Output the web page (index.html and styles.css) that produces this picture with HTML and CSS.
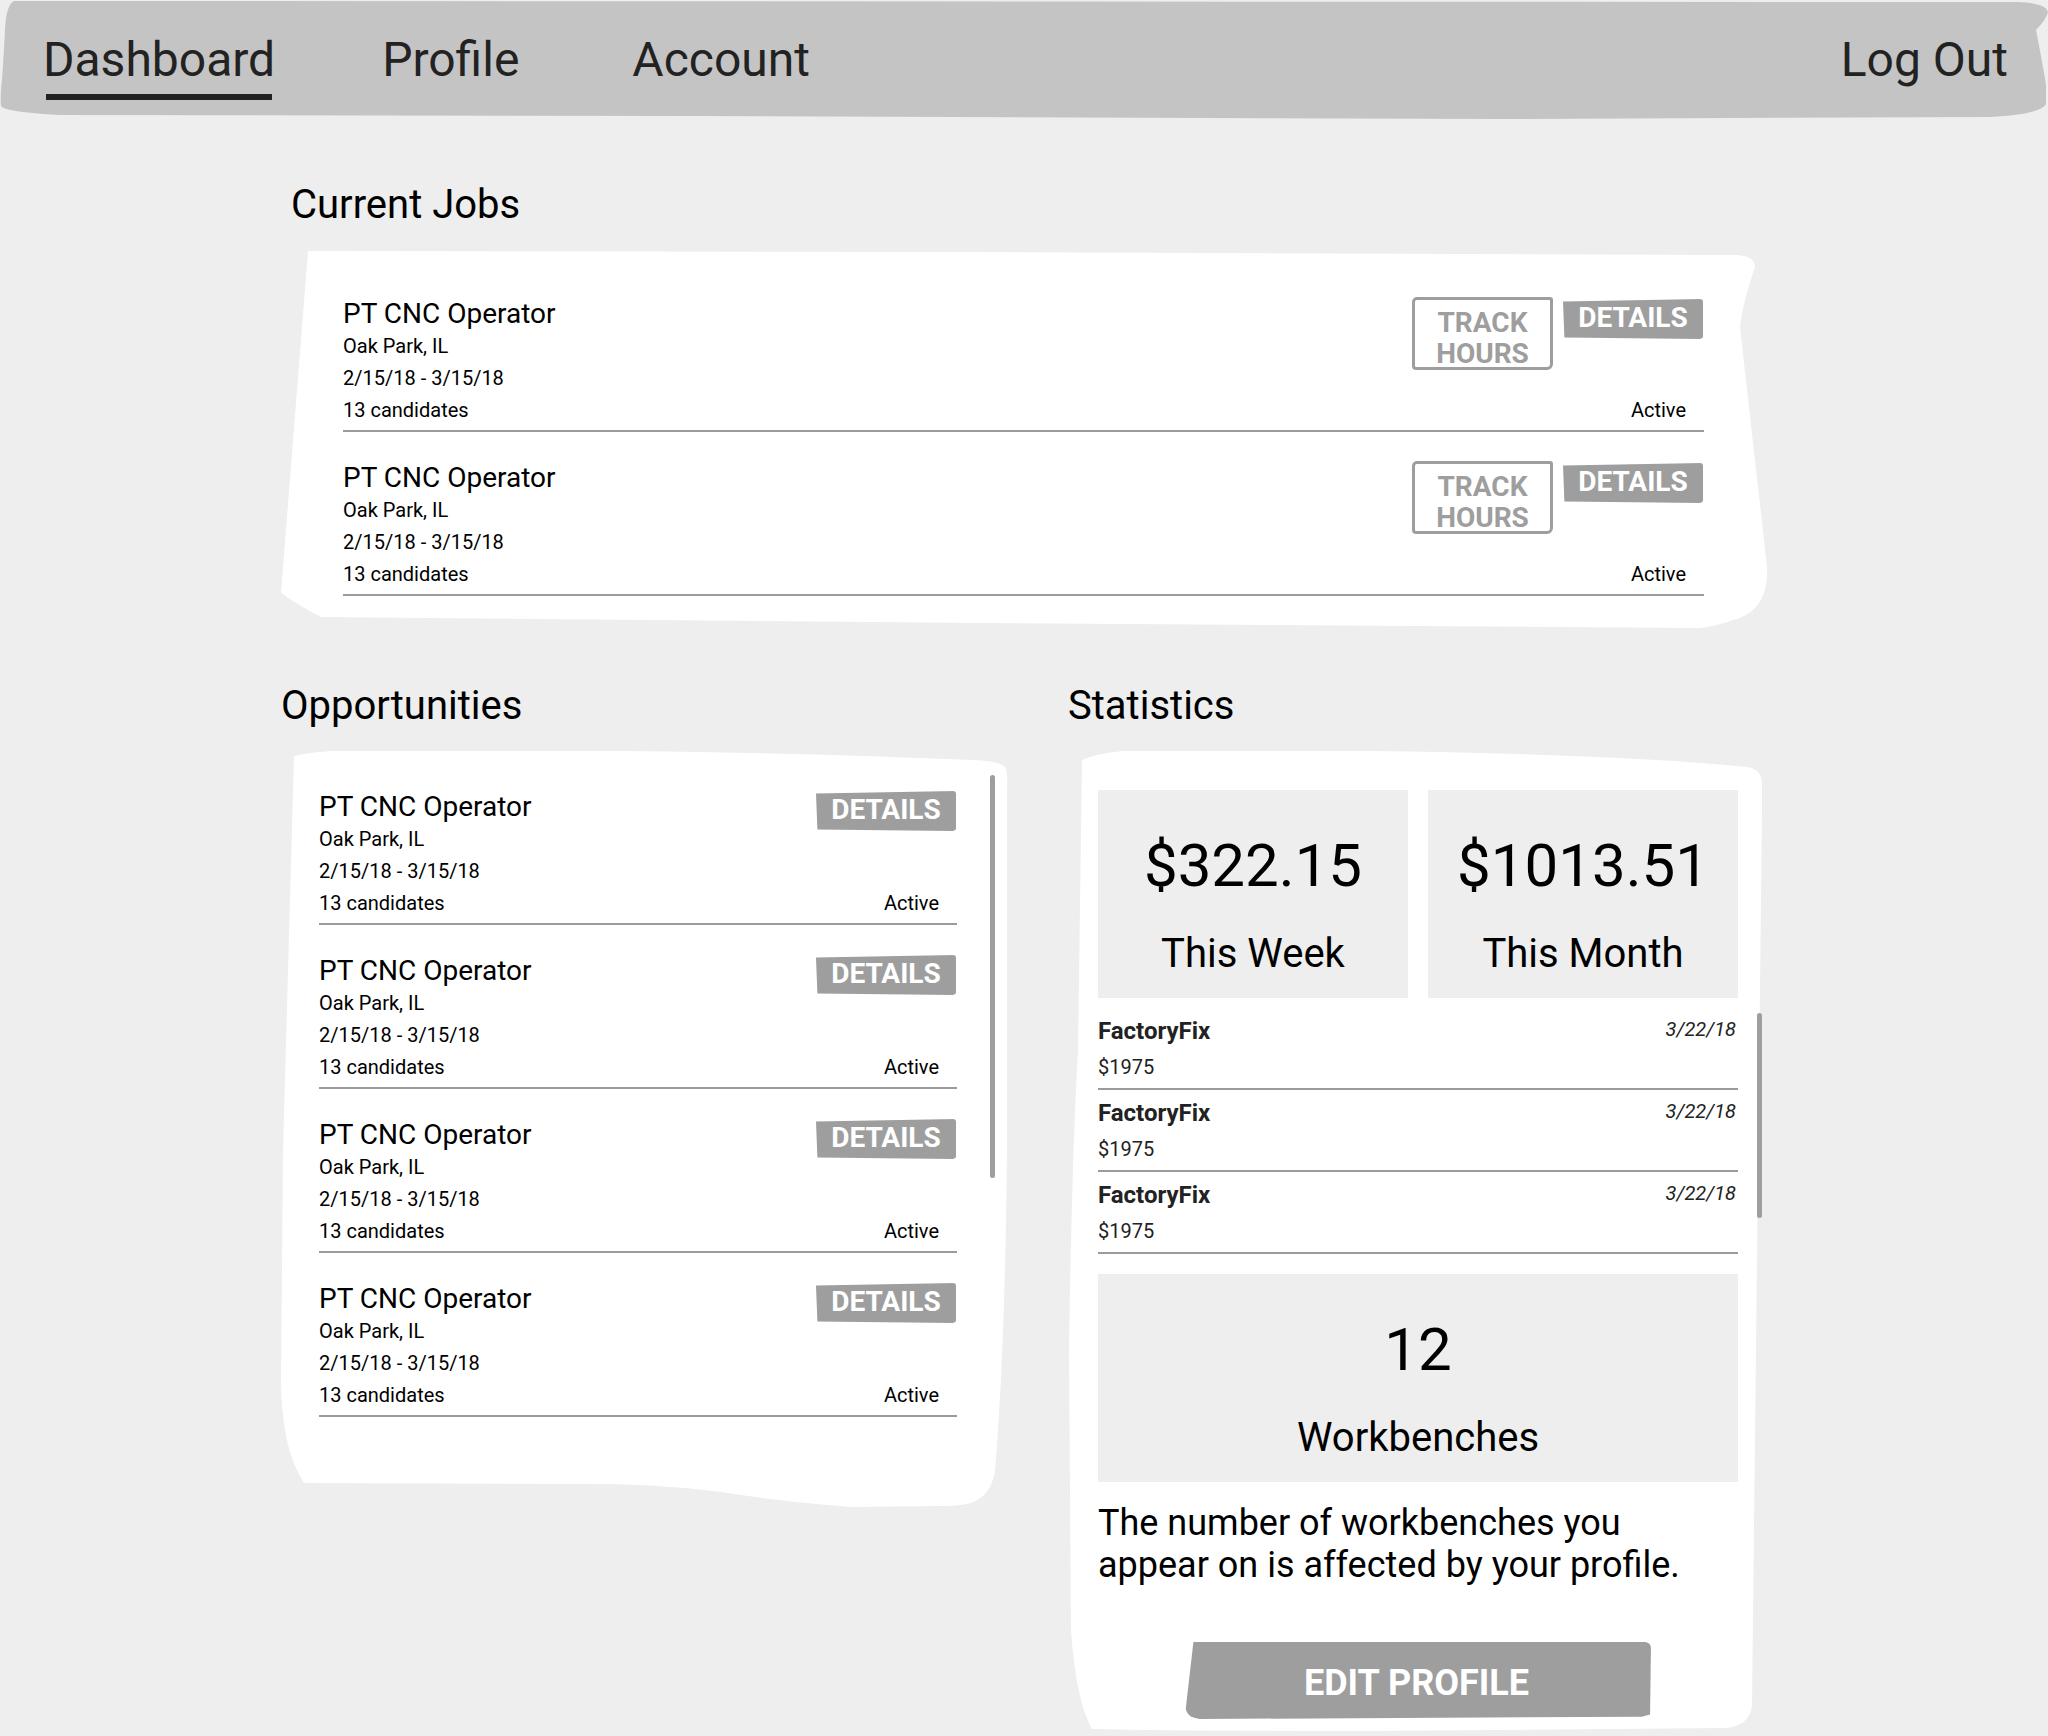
FILE: index.html
```html
<!DOCTYPE html>
<html lang="en">
<head>
<meta charset="utf-8">
<title>Dashboard</title>
<link rel="stylesheet" href="styles.css">
</head>
<body>
<nav class="topnav">
  <svg class="shape" viewBox="0 0 2048 120" preserveAspectRatio="none" aria-hidden="true"><path d="M14,1 L2017,2 Q2046,3 2048,12 Q2046,20 2036,30 Q2042,60 2046,85 L2046,104 Q2042,114 1990,117 L1500,119 L700,116 L60,115 Q4,112 1,106 Q0,95 2,80 Q4,50 5,30 Q6,5 14,1 Z"/></svg>
  <div class="nav-left">
    <a class="nav-item active" href="#">Dashboard</a>
    <a class="nav-item" href="#">Profile</a>
    <a class="nav-item" href="#">Account</a>
  </div>
  <a class="nav-item" href="#">Log Out</a>
</nav>

<main class="page">
  <h2 class="section-title jobs-title">Current Jobs</h2>
  <section class="card jobs-card">
    <svg class="shape" viewBox="0 0 1486 380" preserveAspectRatio="none" aria-hidden="true"><path d="M27,0 L700,1 L1456,4 Q1474,5 1474,16 Q1462,50 1459,76 L1486,316 Q1488,360 1452,369 Q1440,374 1419,377 L700,372 L40,366 Q20,356 0,342 Z"/></svg>
    <div class="row">
      <div class="info">
        <div class="title">PT CNC Operator</div>
        <div class="meta">Oak Park, IL</div>
        <div class="meta">2/15/18 - 3/15/18</div>
        <div class="meta">13 candidates</div>
      </div>
      <div class="side">
        <div class="actions">
          <a class="btn-outline" href="#">TRACK<br>HOURS</a>
          <a class="btn-details" href="#">DETAILS</a>
        </div>
        <div class="status">Active</div>
      </div>
    </div>
    <div class="row">
      <div class="info">
        <div class="title">PT CNC Operator</div>
        <div class="meta">Oak Park, IL</div>
        <div class="meta">2/15/18 - 3/15/18</div>
        <div class="meta">13 candidates</div>
      </div>
      <div class="side">
        <div class="actions">
          <a class="btn-outline" href="#">TRACK<br>HOURS</a>
          <a class="btn-details" href="#">DETAILS</a>
        </div>
        <div class="status">Active</div>
      </div>
    </div>
  </section>

  <div class="columns">
    <div class="col">
      <h2 class="section-title">Opportunities</h2>
      <section class="card opp-card">
        <svg class="shape" viewBox="0 0 727 756" preserveAspectRatio="none" aria-hidden="true"><path d="M13,5 Q30,1 52,0 L328,0 Q500,1 692,9 Q718,10 724,16 Q727,22 726,40 L726,400 Q724,600 714,720 Q710,745 690,752 Q680,755 660,755 L571,756 Q520,752 474,746 Q400,734 328,733 L23,732 Q12,715 6,690 Q0,660 0,630 L2,400 Z"/></svg>
        <div class="row">
          <div class="info">
            <div class="title">PT CNC Operator</div>
            <div class="meta">Oak Park, IL</div>
            <div class="meta">2/15/18 - 3/15/18</div>
            <div class="meta">13 candidates</div>
          </div>
          <div class="side">
            <div class="actions"><a class="btn-details" href="#">DETAILS</a></div>
            <div class="status">Active</div>
          </div>
        </div>
        <div class="row">
          <div class="info">
            <div class="title">PT CNC Operator</div>
            <div class="meta">Oak Park, IL</div>
            <div class="meta">2/15/18 - 3/15/18</div>
            <div class="meta">13 candidates</div>
          </div>
          <div class="side">
            <div class="actions"><a class="btn-details" href="#">DETAILS</a></div>
            <div class="status">Active</div>
          </div>
        </div>
        <div class="row">
          <div class="info">
            <div class="title">PT CNC Operator</div>
            <div class="meta">Oak Park, IL</div>
            <div class="meta">2/15/18 - 3/15/18</div>
            <div class="meta">13 candidates</div>
          </div>
          <div class="side">
            <div class="actions"><a class="btn-details" href="#">DETAILS</a></div>
            <div class="status">Active</div>
          </div>
        </div>
        <div class="row">
          <div class="info">
            <div class="title">PT CNC Operator</div>
            <div class="meta">Oak Park, IL</div>
            <div class="meta">2/15/18 - 3/15/18</div>
            <div class="meta">13 candidates</div>
          </div>
          <div class="side">
            <div class="actions"><a class="btn-details" href="#">DETAILS</a></div>
            <div class="status">Active</div>
          </div>
        </div>
        <div class="scrollbar"></div>
      </section>
    </div>

    <div class="col">
      <h2 class="section-title">Statistics</h2>
      <section class="card stats-card">
        <svg class="shape" viewBox="0 0 699 984" preserveAspectRatio="none" aria-hidden="true"><path d="M14,9 Q30,2 56,0 L300,0 Q550,3 680,16 Q692,18 694,30 L694,60 L684,955 Q682,973 660,977 L300,980 Q120,980 24,978 Q8,950 3,880 L1,600 Q4,400 10,300 Z"/></svg>
        <div class="stat-grid">
          <div class="stat-box">
            <div class="stat-value">$322.15</div>
            <div class="stat-label">This Week</div>
          </div>
          <div class="stat-box">
            <div class="stat-value">$1013.51</div>
            <div class="stat-label">This Month</div>
          </div>
        </div>
        <div class="tx-list">
          <div class="tx">
            <div>
              <div class="tx-name">FactoryFix</div>
              <div class="tx-amount">$1975</div>
            </div>
            <div class="tx-date">3/22/18</div>
          </div>
          <div class="tx">
            <div>
              <div class="tx-name">FactoryFix</div>
              <div class="tx-amount">$1975</div>
            </div>
            <div class="tx-date">3/22/18</div>
          </div>
          <div class="tx">
            <div>
              <div class="tx-name">FactoryFix</div>
              <div class="tx-amount">$1975</div>
            </div>
            <div class="tx-date">3/22/18</div>
          </div>
        </div>
        <div class="stat-box wide">
          <div class="stat-value">12</div>
          <div class="stat-label">Workbenches</div>
        </div>
        <p class="desc">The number of workbenches you appear on is affected by your profile.</p>
        <a class="btn-edit" href="#">EDIT PROFILE</a>
        <div class="scrollbar"></div>
      </section>
    </div>
  </div>
</main>
</body>
</html>
```

FILE: styles.css
```css
* { box-sizing: border-box; }

html, body { margin: 0; padding: 0; }

body {
  background: #eeeeee;
  font-family: Roboto, "Noto Sans", "Liberation Sans", sans-serif;
  color: #000;
}

a { text-decoration: none; }

/* decorative hand-drawn shapes behind content */
.shape {
  position: absolute;
  left: 0;
  top: 0;
  width: 100%;
  height: 100%;
  z-index: -1;
  display: block;
}

/* ---------- top nav ---------- */
.topnav {
  position: relative;
  z-index: 0;
  height: 120px;
  display: flex;
  justify-content: space-between;
  align-items: flex-start;
  padding: 32px 40px 0 43px;
}
.topnav .shape path { fill: #c4c4c4; }

.nav-left { display: flex; gap: 113px; }

.nav-item {
  display: block;
  font-size: 48px;
  line-height: 56px;
  color: #222;
}
.nav-item.active { margin-right: -6px; }
.nav-item.active::after {
  content: "";
  display: block;
  height: 6px;
  width: 226px;
  margin: 6px 0 0 3px;
  background: #222;
}

/* ---------- page ---------- */
.page {
  width: 1486px;
  margin: 0 auto;
  padding-top: 61px;
}

.section-title {
  margin: 0 0 22px 0;
  font-size: 40px;
  line-height: 48px;
  font-weight: 400;
  color: #000;
}
.jobs-title { margin-left: 10px; }

.card { position: relative; z-index: 0; }
.card .shape path { fill: #fff; }

.jobs-card { padding: 17px 63px 35px 62px; }

.columns {
  display: grid;
  grid-template-columns: 727px 699px;
  gap: 60px;
  margin-top: 51px;
  align-items: start;
}
.columns .section-title { margin-bottom: 21px; }

.opp-card { padding: 10px 51px 90px 38px; }

/* ---------- job rows ---------- */
.row {
  display: flex;
  justify-content: space-between;
  padding: 30px 0 4px;
  border-bottom: 2px solid #9b9b9b;
}
.info { display: flex; flex-direction: column; }
.title { font-size: 28px; line-height: 32px; }
.meta { font-size: 20px; line-height: 32px; }

.side {
  display: flex;
  flex-direction: column;
  justify-content: space-between;
  align-items: flex-end;
}
.actions { display: flex; gap: 10px; align-items: flex-start; }
.status { font-size: 20px; line-height: 32px; margin-right: 18px; }

.btn-details {
  display: block;
  width: 140px;
  height: 40px;
  padding-bottom: 3px;
  background: #9e9e9e;
  color: #fff;
  font-weight: 700;
  font-size: 28px;
  line-height: 37px;
  text-align: center;
  border-radius: 3px;
  clip-path: polygon(0 6%, 100% 0, 100% 97%, 98% 100%, 1% 96%);
  margin-right: 1px;
}
.jobs-card .btn-details { margin-top: 1px; }

.btn-outline {
  display: block;
  width: 141px;
  height: 73px;
  margin-top: -1px;
  padding-top: 7px;
  border: 3px solid #9e9e9e;
  border-radius: 5px 3px 6px 4px;
  color: #9e9e9e;
  font-weight: 700;
  font-size: 28px;
  line-height: 31px;
  text-align: center;
  overflow: visible;
}

/* ---------- statistics ---------- */
.stats-card { padding: 39px 29px 16px 30px; }

.stat-grid {
  display: grid;
  grid-template-columns: 1fr 1fr;
  gap: 20px;
}
.stat-box {
  background: #eeeeee;
  height: 208px;
  padding-top: 40px;
  text-align: center;
}
.stat-value { font-size: 60px; line-height: 72px; }
.stat-label { font-size: 40px; line-height: 48px; margin-top: 28px; }

.tx-list { margin-top: 10px; }
.tx {
  display: flex;
  justify-content: space-between;
  align-items: flex-start;
  padding-top: 8px;
  border-bottom: 2px solid #9b9b9b;
}
.tx-name { font-weight: 700; font-size: 24px; line-height: 30px; color: #222; }
.tx-amount { font-size: 20px; line-height: 42px; color: #222; }
.tx-date {
  font-style: italic;
  font-size: 20px;
  line-height: 26px;
  color: #222;
  margin-right: 2px;
}

.stat-box.wide { margin-top: 20px; }

.desc {
  margin: 20px 40px 0 0;
  font-size: 36px;
  line-height: 42px;
  color: #000;
}

.btn-edit {
  display: block;
  width: 466px;
  height: 77px;
  margin: 56px auto 0;
  padding: 5px 3px 0 0;
  background: #9e9e9e;
  color: #fff;
  font-weight: 700;
  font-size: 36px;
  line-height: 72px;
  text-align: center;
  border-radius: 4px 6px 8px 14px;
  clip-path: polygon(1.8% 0, 99% 0, 100% 2%, 99.8% 94%, 98% 97%, 3% 100%, 0 95%);
}

/* scroll indicators overlaying the lists */
.scrollbar {
  position: absolute;
  width: 5px;
  background: #9e9e9e;
  border-radius: 3px;
}
.opp-card .scrollbar { left: 709px; top: 24px; height: 403px; }
.stats-card .scrollbar { left: 689px; top: 262px; height: 205px; }
```
